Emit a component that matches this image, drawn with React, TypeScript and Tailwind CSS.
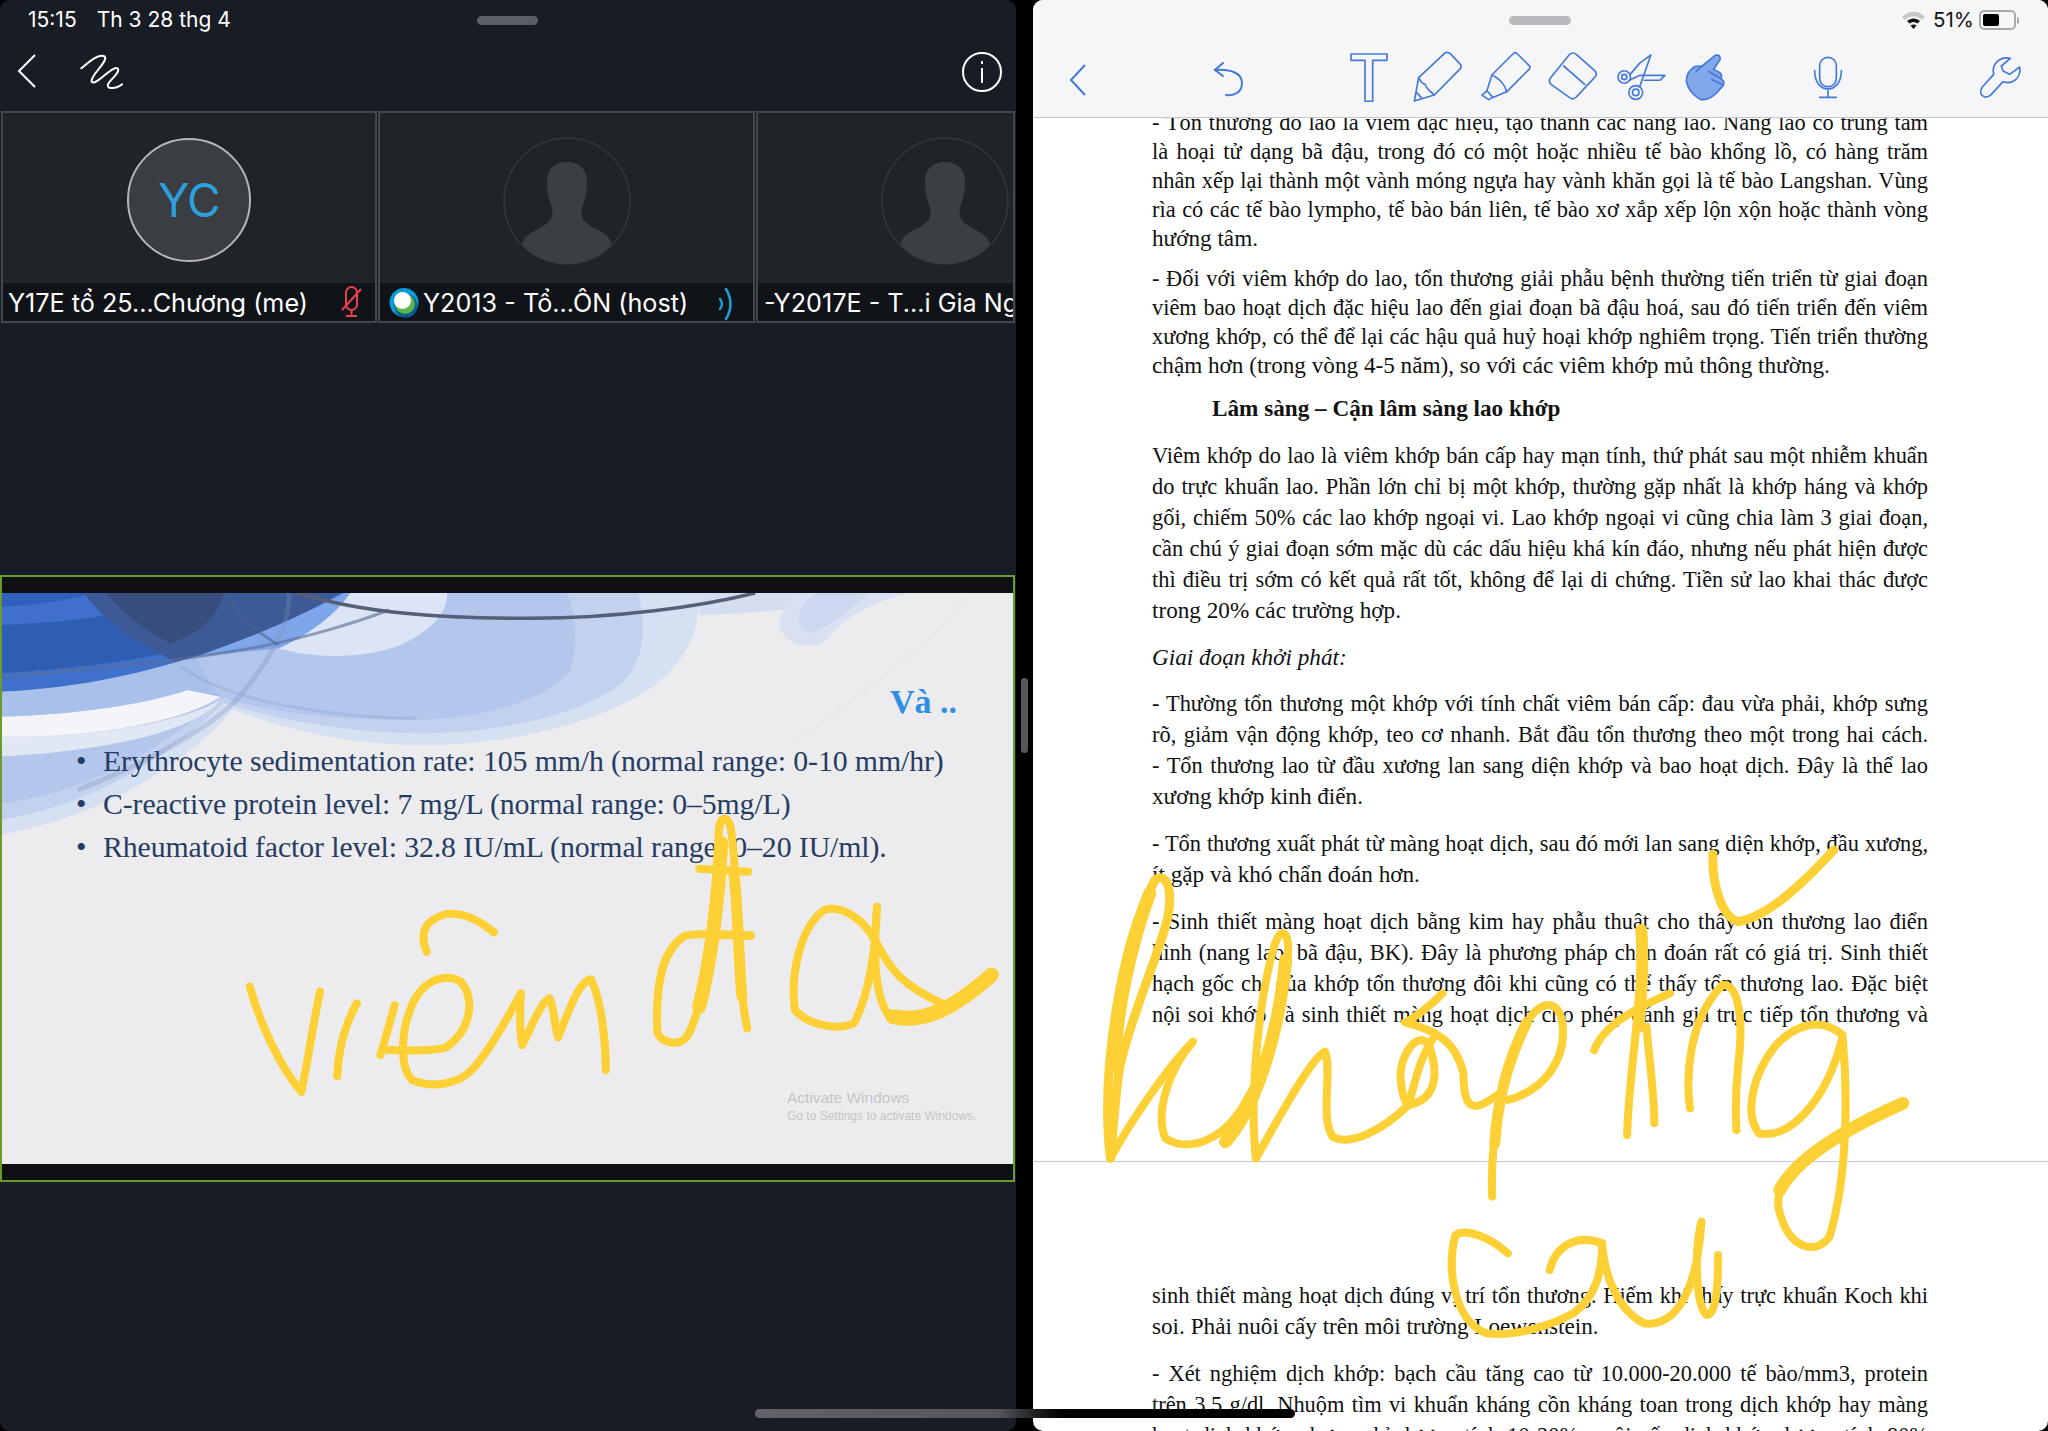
const SERIF = "font-['Liberation_Serif',serif]";

function Para({
  lines,
  height = "h-[31px]",
  full = false,
  className = "",
}: {
  lines: string[];
  height?: string;
  full?: boolean;
  className?: string;
}) {
  return (
    <div className={className}>
      {lines.map((t, i) => (
        <div
          key={i}
          className={`${height} flex items-center`}
        >
          <div
            className={
              i < lines.length - 1 || full
                ? "w-full whitespace-nowrap text-[22.4px] text-justify [text-align-last:justify]"
                : "w-full whitespace-nowrap"
            }
          >
            {t}
          </div>
        </div>
      ))}
    </div>
  );
}

function Ink({ d, w = 8 }: { d: string; w?: number }) {
  return (
    <path
      d={d}
      fill="none"
      stroke="#fdd035"
      strokeWidth={w}
      strokeLinecap="round"
      strokeLinejoin="round"
      vectorEffect="non-scaling-stroke"
    />
  );
}

function Silhouette({ className }: { className: string }) {
  return (
    <svg width="128" height="128" viewBox="-1 -1 128 128" className={className}>
      <circle cx="63" cy="63" r="63" fill="none" stroke="#33373c" strokeWidth="1.5" />
      <path
        d="M63 24C52 24 43 30 43 44C43 56 46 64 48 70C50 80 46 84 36 90C28 94 20 98 18 106C28 118 45 126 63 126C81 126 98 118 108 106C106 98 98 94 90 90C80 84 76 80 78 70C80 64 83 56 83 44C83 30 74 24 63 24Z"
        fill="#3b3e43"
      />
    </svg>
  );
}

function Tile({
  width,
  children,
  label,
}: {
  width: string;
  children: React.ReactNode;
  label: React.ReactNode;
}) {
  return (
    <div className={`${width} shrink-0 h-[212px] border-2 border-[#43464b] bg-[#202429] flex flex-col overflow-hidden`}>
      <div className="h-[170px] relative">{children}</div>
      <div className="flex-1 bg-[#101317] flex items-center pt-[4px] text-[25.2px] text-white whitespace-nowrap overflow-hidden">
        {label}
      </div>
    </div>
  );
}

function ToolIcon({
  w,
  h,
  box,
  ml,
  children,
}: {
  w: number;
  h: number;
  box: string;
  ml: string;
  children: React.ReactNode;
}) {
  return (
    <svg
      width={w}
      height={h}
      viewBox={box}
      fill="none"
      stroke="#4379d8"
      strokeWidth="5"
      strokeLinejoin="round"
      strokeLinecap="round"
      className={`${ml} shrink-0`}
    >
      {children}
    </svg>
  );
}

export default function App() {
  return (
    <div className="relative w-[2048px] h-[1431px] bg-black overflow-hidden font-['Inter',sans-serif] flex">
      {/* left: meeting */}
      <div className="w-[1016px] h-full bg-[#181c24] rounded-[10px] flex flex-col overflow-hidden">
        <div className="h-[40px] flex items-center relative text-white text-[21px]">
          <span className="ml-[28px]">15:15</span>
          <span className="ml-[20px]">Th 3 28 thg 4</span>
          <div className="ml-[246px] w-[61px] h-[9px] rounded-full bg-[#5b5e64]" />
        </div>
        <div className="h-[71px] flex items-center text-white">
          <svg width="20" height="36" viewBox="0 0 20 36" fill="none" stroke="#fff" strokeWidth="2" className="ml-[17px] -mt-[9px]">
            <path d="M18 2L2 18L18 34" />
          </svg>
          <svg width="44" height="36" viewBox="120 160 68 106" preserveAspectRatio="none" fill="none" className="ml-[43px] -mt-[9px]">
            <path
              d="M122 205C135 185 150 160 158 170C165 185 135 225 138 245C145 258 170 195 178 205C185 220 155 250 165 262C175 265 180 260 185 252"
              stroke="#fff"
              strokeWidth="2"
              strokeLinecap="round"
              vectorEffect="non-scaling-stroke"
            />
          </svg>
          <div className="ml-auto mr-[14px] -mt-[7px] w-[40px] h-[40px] rounded-full border-2 border-white flex items-center justify-center">
            <svg width="4" height="22" viewBox="0 0 4 22" fill="#fff">
              <rect x="1" y="0" width="2" height="3" />
              <rect x="1" y="7" width="2" height="15" />
            </svg>
          </div>
        </div>
        <div className="flex h-[212px] gap-[1px] pl-[1px] overflow-hidden">
          <Tile
            width="w-[376px]"
            label={
              <>
                <span className="ml-[5px]">Y17E tổ 25...Chương (me)</span>
                <svg width="26" height="32" viewBox="0 0 26 32" fill="none" stroke="#e8434b" strokeWidth="2" className="ml-auto mr-[11px] -mt-[4px]">
                  <rect x="8" y="1" width="11" height="23" rx="5.5" />
                  <path d="M13.5 24V29M8 30H19" />
                  <path d="M4 24L23 3" />
                </svg>
              </>
            }
          >
            <div className="w-[124px] h-[124px] mt-[25px] ml-[124px] rounded-full border-2 border-[#b5b6b8] bg-[#3a3d42] flex items-center justify-center text-[46px] text-[#2c9fdc] tracking-[-1px]">
              YC
            </div>
          </Tile>
          <Tile
            width="w-[377px]"
            label={
              <>
                <svg width="30" height="31" viewBox="0 0 30 31" className="ml-[9px] shrink-0 -mt-[4px]">
                  <circle cx="15" cy="15.5" r="14.5" fill="#0d9ad6" />
                  <circle cx="17" cy="19" r="11.5" fill="#0b5a8f" />
                  <circle cx="16" cy="17" r="10" fill="#5cb848" />
                  <circle cx="13.5" cy="13.5" r="8.5" fill="#fff" />
                </svg>
                <span className="ml-[4px]">Y2013 - Tổ...ÔN (host)</span>
                <svg width="14" height="34" viewBox="0 0 14 34" fill="none" stroke="#19a0dc" strokeLinecap="round" className="ml-auto mr-[20px]">
                  <path d="M7 2C13 12 13 22 7 32" strokeWidth="2.5" />
                  <path d="M1 12C3.5 15 3.5 19 1 22" strokeWidth="2.5" />
                </svg>
              </>
            }
          >
            <Silhouette className="mt-[24px] ml-[123px]" />
          </Tile>
          <Tile width="w-[259px]" label={<span className="ml-[6px]">-Y2017E - T...i Gia Ngọc</span>}>
            <Silhouette className="mt-[24px] ml-[123px]" />
          </Tile>
        </div>

        {/* shared slide */}
        <div className="mt-[252px] w-[1015px] h-[607px] border-2 border-[#6c9a2b] bg-[#0e1013] flex flex-col justify-center">
          <div className="relative h-[571px] bg-[#ececee] overflow-hidden">
            <svg className="absolute left-0 top-0" width="1011" height="267" viewBox="3 9 1560 801" preserveAspectRatio="none">
              <path d="M0 735C120 690 250 590 360 360C430 410 520 460 640 465C780 470 920 400 1000 300C1060 220 1085 110 1075 9L0 9Z" fill="#d6e0f3" />
              <path d="M0 690C100 660 230 560 345 340C420 385 520 425 640 430C780 430 900 370 960 280C1000 200 995 90 985 9L0 9Z" fill="#c3d1ee" />
              <path d="M0 640C100 620 220 530 340 320C420 370 520 390 640 390C760 385 850 320 880 240C890 170 890 80 875 9L0 9Z" fill="#b3c6ec" />
              <path d="M0 440C130 445 280 400 340 330C300 420 180 480 0 500Z" fill="#e2e8f3" />
              <path d="M0 380C110 375 220 345 290 300L340 320C280 400 130 445 0 440Z" fill="#f4f5f8" />
              <path d="M0 300C110 290 200 260 300 200L340 320L290 300C220 345 110 375 0 380Z" fill="#a9c0ea" />
              <path d="M430 175C500 215 600 205 650 130C680 90 690 50 690 9H540C520 70 480 130 430 175Z" fill="#dce4f5" />
              <path d="M430 175C480 130 520 70 540 9H460C440 60 370 130 300 200Z" fill="#7fa5ea" />
              <path d="M0 9V305C110 295 200 260 300 200C390 140 470 75 530 9Z" fill="#3f70cb" />
              <path d="M0 9V50C60 45 110 30 140 9Z" fill="#2f60bc" />
              <path d="M0 105C80 100 140 85 180 70C195 110 220 150 255 190C170 225 80 240 0 250Z" fill="#2f5db2" />
              <path d="M130 9C155 80 200 150 270 215L300 200C390 140 470 75 525 9Z" fill="#3d5a96" />
              <path d="M165 9C185 60 215 110 262 160C310 130 340 70 345 9Z" fill="#374d7c" />
              <path d="M0 262C100 242 260 222 400 170C480 140 560 90 600 60" fill="none" stroke="#5a6d96" strokeWidth="3" opacity="0.6" vectorEffect="non-scaling-stroke" />
              <path d="M445 9C450 90 420 200 370 320C330 400 250 500 120 600" fill="none" stroke="#7c8fb8" strokeWidth="5" opacity="0.3" vectorEffect="non-scaling-stroke" />
              <path d="M350 9C370 90 400 130 430 165" fill="none" stroke="#4a5f8c" strokeWidth="3" opacity="0.5" vectorEffect="non-scaling-stroke" />
              <path d="M280 230C340 320 480 380 640 385" fill="none" stroke="#8397c0" strokeWidth="3" opacity="0.25" vectorEffect="non-scaling-stroke" />
              <path d="M1075 9H1400C1330 30 1200 70 1080 75Z" fill="#d5def1" />
              <path d="M1400 9C1340 40 1300 90 1280 140C1260 185 1215 170 1205 120C1195 70 1220 30 1250 9Z" fill="#d8e0f1" />
              <path d="M1260 9C1225 50 1225 110 1250 130C1275 120 1310 60 1340 9Z" fill="#cdd8ef" />
              <path d="M460 9C560 70 680 85 820 85C950 85 1080 50 1165 9" fill="none" stroke="#555f78" strokeWidth="3.5" vectorEffect="non-scaling-stroke" />
              <path d="M1490 20C1450 150 1300 350 1230 450" fill="none" stroke="#dfe1e6" strokeWidth="1" vectorEffect="non-scaling-stroke" />
            </svg>
            <div className={`relative ${SERIF}`}>
              <div className="h-[48px] pt-[85px] box-content pr-[56px] text-right text-[34px] font-bold leading-[48px] text-[#2f8fe3]">
                Và ..
              </div>
              <ul className="mt-[13px] pl-[74px] text-[#263c62] text-[29.8px] leading-[43px] tracking-[-0.1px]">
                <li className="flex whitespace-nowrap"><span className="w-[27px] shrink-0">•</span>Erythrocyte sedimentation rate: 105 mm/h (normal range: 0-10 mm/hr)</li>
                <li className="flex whitespace-nowrap"><span className="w-[27px] shrink-0">•</span>C-reactive protein level: 7 mg/L (normal range: 0–5mg/L)</li>
                <li className="flex whitespace-nowrap"><span className="w-[27px] shrink-0">•</span>Rheumatoid factor level: 32.8 IU/mL (normal range: 0–20 IU/ml).</li>
              </ul>
            </div>
            <div className="relative mt-[220px] ml-[785px] font-['Liberation_Sans',sans-serif] text-[#c4c5c8] whitespace-nowrap">
              <div className="text-[15.5px] leading-[20px]">Activate Windows</div>
              <div className="text-[12px] leading-[16px]">Go to Settings to activate Windows.</div>
            </div>
          </div>
        </div>
      </div>

      {/* divider */}
      <div className="w-[17px] h-full flex items-center justify-center">
        <div className="w-[7px] h-[75px] rounded-full bg-[#56585c]" />
      </div>

      {/* right: notes */}
      <div className="w-[1015px] h-full bg-white rounded-[10px] flex flex-col overflow-hidden">
        <div className="h-[118px] shrink-0 bg-[#f6f6f9] border-b border-[#c6c6ca] flex flex-col z-10">
          <div className="h-[40px] flex items-center text-[#111] text-[20.5px]">
            <div className="ml-[476px] w-[62px] h-[9px] rounded-full bg-[#b9babd]" />
            <svg width="25" height="20" viewBox="0 0 25 20" className="ml-[330px]">
              <path d="M1 7C8 0 17 0 24 7L21 10C15.500 5 9.500 5 4 10Z" fill="#c7c7c9" />
              <path d="M6 11C10 7.500 15 7.500 19 11L16.500 13.500C14 11.500 11 11.500 8.500 13.500Z" fill="#111" />
              <path d="M12.500 19L9.500 15.500C11.500 14 13.500 14 15.500 15.500Z" fill="#111" />
            </svg>
            <span className="ml-[7px]">51%</span>
            <div className="ml-[5px] w-[37px] h-[20px] rounded-[5px] border-2 border-[#a9a9ab] p-[2px]">
              <div className="w-[16px] h-full rounded-[2px] bg-black" />
            </div>
            <div className="ml-[1px] w-[2px] h-[7px] rounded-r bg-[#a9a9ab]" />
          </div>
          <div className="flex-1 flex items-center -mt-[3px]">
            <svg width="18" height="34" viewBox="0 0 18 34" fill="none" stroke="#4379d8" strokeWidth="2" className="ml-[36px] mt-[5px] shrink-0">
              <path d="M16 2L2 17L16 32" />
            </svg>
            <svg width="32" height="36" viewBox="0 0 32 36" fill="none" stroke="#4379d8" strokeWidth="2" strokeLinecap="round" className="ml-[126px] mt-[4px] shrink-0">
              <path d="M10 2L2 9L10 15" />
              <path d="M2 9C20 8 29 13 29 22C29 31 22 35 13 34" />
            </svg>
            <ToolIcon ml="ml-[105px]" w={38} h={49} box="30 30 114 147">
              <path d="M33 33H141V52H98V175H75V52H33Z" />
            </ToolIcon>
            <ToolIcon ml="ml-[25px]" w={50} h={52} box="218 25 150 156">
              <path d="M235 105L315 30Q322 27 330 33L360 65Q365 72 360 78L282 157L222 175Z" />
              <path d="M235 105C240 115 245 125 255 125C258 140 270 145 282 157" />
              <path d="M229 150L243 165" />
            </ToolIcon>
            <ToolIcon ml="ml-[18px]" w={50} h={52} box="422 25 152 156">
              <path d="M455 97L522 30Q528 27 533 33L570 70Q572 75 568 80L500 148L458 165L445 172L425 158L440 145Z" />
              <path d="M455 97C475 105 495 125 500 148" />
              <path d="M440 145L458 165" />
            </ToolIcon>
            <ToolIcon ml="ml-[17px]" w={50} h={52} box="625 25 150 156">
              <path d="M634 104L690 35Q700 27 710 35L765 84Q775 94 765 104L710 163Q700 173 690 165L634 125Q624 114 634 104Z" />
              <path d="M672 70L735 125" />
            </ToolIcon>
            <ToolIcon ml="ml-[18px]" w={50} h={52} box="832 25 152 156">
              <circle cx="857" cy="103" r="19" />
              <circle cx="857" cy="103" r="8" />
              <circle cx="892" cy="150" r="21" />
              <circle cx="892" cy="150" r="10" />
              <path d="M875 95L905 60L938 36L905 130" />
              <path d="M874 112L905 98H981L965 113H918" />
            </ToolIcon>
            <ToolIcon ml="ml-[19px]" w={42} h={48} box="45 45 125 145">
              <path
                d="M135 52Q152 48 150 65L130 95L150 105Q158 112 152 122Q165 130 160 142L140 165Q115 190 90 185Q55 165 48 130Q48 100 75 85L95 85Z"
                fill="#82a8ec"
              />
              <path d="M95 85L78 100" />
              <path d="M115 100L148 120M125 125L156 140" />
            </ToolIcon>
            <ToolIcon ml="ml-[86px]" w={30} h={44} box="430 50 90 132">
              <rect x="450" y="57" width="50" height="88" rx="25" />
              <path d="M435 97C435 170 515 170 515 97M475 157V177M450 177H500" />
            </ToolIcon>
            <ToolIcon ml="ml-[135px]" w={44} h={44} box="925 52 132 132">
              <path d="M1022 62C990 55 965 80 972 110L938 148Q925 170 945 178Q955 180 965 170L1000 132C1030 142 1055 120 1050 88L1020 110L1000 100L995 85Z" />
            </ToolIcon>
          </div>
        </div>
        <div className="flex-1 overflow-hidden">
          <div className={`h-[1054px] -mt-[10px] border-b border-[#bccadb] pl-[119px] pr-[120px] ${SERIF} text-[23.2px] text-[#111]`}>
            <Para
              height="h-[29px]"
              lines={[
                "- Tổn thương do lao là viêm đặc hiệu, tạo thành các nang lao. Nang lao có trung tâm",
                "là hoại tử dạng bã đậu, trong đó có một hoặc nhiều tế bào khổng lồ, có hàng trăm",
                "nhân xếp lại thành một vành móng ngựa hay vành khăn gọi là tế bào Langshan. Vùng",
                "rìa có các tế bào lympho, tế bào bán liên, tế bào xơ xắp xếp lộn xộn hoặc thành vòng",
                "hướng tâm.",
              ]}
            />
            <Para
              height="h-[29px]"
              className="mt-[11px]"
              lines={[
                "- Đối với viêm khớp do lao, tổn thương giải phẫu bệnh thường tiến triển từ giai đoạn",
                "viêm bao hoạt dịch đặc hiệu lao đến giai đoạn bã đậu hoá, sau đó tiến triển đến viêm",
                "xương khớp, có thể để lại các hậu quả huỷ hoại khớp nghiêm trọng. Tiến triển thường",
                "chậm hơn (trong vòng 4-5 năm), so với các viêm khớp mủ thông thường.",
              ]}
            />
            <div className="mt-[13px] h-[30px] pl-[60px] font-bold leading-[30px]">Lâm sàng – Cận lâm sàng lao khớp</div>
            <Para
              className="mt-[17px]"
              lines={[
                "Viêm khớp do lao là viêm khớp bán cấp hay mạn tính, thứ phát sau một nhiễm khuẩn",
                "do trực khuẩn lao. Phần lớn chỉ bị một khớp, thường gặp nhất là khớp háng và khớp",
                "gối, chiếm 50% các lao khớp ngoại vi. Lao khớp ngoại vi cũng chia làm 3 giai đoạn,",
                "cần chú ý giai đoạn sớm mặc dù các dấu hiệu khá kín đáo, nhưng nếu phát hiện được",
                "thì điều trị sớm có kết quả rất tốt, không để lại di chứng. Tiền sử lao khai thác được",
                "trong 20% các trường hợp.",
              ]}
            />
            <div className="mt-[16px] h-[30px] italic leading-[30px]">Giai đoạn khởi phát:</div>
            <Para
              className="mt-[16px]"
              lines={[
                "- Thường tổn thương một khớp với tính chất viêm bán cấp: đau vừa phải, khớp sưng",
                "rõ, giảm vận động khớp, teo cơ nhanh. Bắt đầu tổn thương theo một trong hai cách.",
                "- Tổn thương lao từ đầu xương lan sang diện khớp và bao hoạt dịch. Đây là thể lao",
                "xương khớp kinh điển.",
              ]}
            />
            <Para
              className="mt-[16px]"
              lines={[
                "- Tổn thương xuất phát từ màng hoạt dịch, sau đó mới lan sang diện khớp, đầu xương,",
                "ít gặp và khó chẩn đoán hơn.",
              ]}
            />
            <Para
              className="mt-[16px]"
              full
              lines={[
                "- Sinh thiết màng hoạt dịch bằng kim hay phẫu thuật cho thấy tổn thương lao điển",
                "hình (nang lao, bã đậu, BK). Đây là phương pháp chẩn đoán rất có giá trị. Sinh thiết",
                "hạch gốc chi của khớp tổn thương đôi khi cũng có thể thấy tổn thương lao. Đặc biệt",
                "nội soi khớp và sinh thiết màng hoạt dịch cho phép đánh giá trực tiếp tổn thương và",
              ]}
            />
          </div>
          <div className={`pt-[118px] pl-[119px] pr-[120px] ${SERIF} text-[23.2px] text-[#111]`}>
            <Para
              lines={[
                "sinh thiết màng hoạt dịch đúng vị trí tổn thương. Hiếm khi thấy trực khuẩn Koch khi",
                "soi. Phải nuôi cấy trên môi trường Loewenstein.",
              ]}
            />
            <Para
              className="mt-[16px]"
              full
              lines={[
                "- Xét nghiệm dịch khớp: bạch cầu tăng cao từ 10.000-20.000 tế bào/mm3, protein",
                "trên 3.5 g/dl. Nhuộm tìm vi khuẩn kháng cồn kháng toan trong dịch khớp hay màng",
                "hoạt dịch khớp nhưng chỉ dương tính 10-20%, nuôi cấy dịch khớp dương tính 80%",
              ]}
            />
          </div>
        </div>
      </div>

      {/* pen annotations, drawn over both panes */}
      <svg className="absolute left-[240px] top-[810px] pointer-events-none overflow-visible" width="770" height="300" viewBox="0 0 1568 900" preserveAspectRatio="none">
        <Ink d="M20 530C40 640 85 780 125 845C140 740 150 630 163 545" />
        <Ink d="M238 580C215 640 200 720 198 798" />
        <Ink d="M315 585C305 640 295 690 286 735" />
        <Ink d="M380 425C365 370 375 330 420 312C460 305 495 340 517 367" />
        <Ink d="M303 720C340 722 395 725 420 712C470 660 480 570 450 515C420 490 380 505 355 570C325 660 325 770 350 810C390 835 445 825 475 775C510 720 550 610 572 550C570 600 568 660 575 705C590 660 615 570 630 565C640 590 640 650 648 682C665 620 690 510 715 508C735 570 745 690 745 780" />
        <Ink d="M1040 378C990 370 930 370 905 378C860 420 845 520 850 670C860 700 895 710 910 680C950 580 970 300 975 60C978 15 995 15 1000 60C1015 200 1010 500 1033 655" />
        <Ink d="M935 590C960 450 975 250 980 100" w={14} />
        <Ink d="M1005 180C1015 300 1015 450 1022 560" w={11} />
        <Ink d="M935 176L1035 185" w={8} />
        <Ink d="M975 376L1040 376" w={8} />
        <Ink d="M1296 400C1270 320 1220 285 1190 300C1140 350 1120 500 1130 600C1160 650 1220 660 1250 640C1280 560 1295 420 1297 290C1290 430 1290 560 1325 625" />
        <Ink d="M1297 400C1320 470 1350 530 1430 580" />
        <Ink d="M1330 620C1390 640 1450 600 1530 495" w={15} />
      </svg>
      <svg className="absolute left-[1100px] top-[860px] pointer-events-none overflow-visible" width="820" height="500" viewBox="0 0 1568 1500" preserveAspectRatio="none">
        <Ink d="M20 895C0 640 40 250 105 60C125 35 140 80 130 170C110 300 60 460 38 620C28 720 25 820 20 895" w={9} />
        <Ink d="M28 620C30 450 60 250 95 100" w={13} />
        <Ink d="M20 895C60 780 130 620 178 545C130 630 105 760 125 835C170 880 240 840 280 720C320 620 360 400 360 260C358 210 345 205 335 250C305 400 285 700 298 895" />
        <Ink d="M240 845C290 760 340 550 355 300" w={13} />
        <Ink d="M298 895C340 780 405 590 430 575C445 620 420 780 445 830C480 860 540 810 590 735C640 720 650 650 630 560C610 500 570 590 575 660C578 710 585 730 590 735" />
        <Ink d="M635 540C610 600 600 680 590 735" />
        <Ink d="M655 400C630 440 600 475 583 487C640 510 680 540 695 640C695 700 700 740 720 738C735 735 745 720 760 705" />
        <Ink d="M750 1010C745 850 770 620 815 490C840 420 880 410 885 500C890 600 850 690 780 720" />
        <Ink d="M755 850C760 720 780 600 815 490" w={11} />
        <Ink d="M1035 210C1040 400 1010 650 1008 825" />
        <Ink d="M1035 210C1040 300 1035 400 1030 500" w={12} />
        <Ink d="M945 570C960 510 1000 460 1090 400" />
        <Ink d="M1045 500C1050 600 1060 700 1060 790" />
        <Ink d="M1128 745C1120 650 1125 480 1190 375C1225 370 1230 500 1220 620C1215 700 1215 750 1217 810" />
        <Ink d="M1172 -18C1170 80 1190 170 1220 185C1280 170 1350 60 1403 -30" w={9} />
        <Ink d="M1420 525C1380 470 1330 490 1290 560C1250 640 1230 760 1260 820C1320 840 1390 720 1420 530C1430 700 1430 950 1395 1130C1370 1185 1320 1170 1300 1060C1280 960 1350 860 1535 730" />
        <Ink d="M1300 990C1330 900 1420 810 1535 730" w={13} />
        <Ink d="M780 1180C745 1130 700 1105 680 1125C660 1230 680 1390 740 1420C790 1430 860 1400 905 1360C950 1310 960 1230 960 1150C910 1120 870 1160 860 1230" />
        <Ink d="M960 1150C965 1250 990 1350 1040 1390C1090 1400 1140 1330 1150 1085C1135 1180 1140 1340 1160 1365C1180 1365 1182 1260 1182 1185" />
      </svg>

      {/* home indicator */}
      <div className="absolute left-[755px] top-[1409px] w-[540px] h-[9px] rounded-full bg-gradient-to-r from-[#606266] via-[#55575b] via-[45%] to-black to-[60%]" />
    </div>
  );
}
